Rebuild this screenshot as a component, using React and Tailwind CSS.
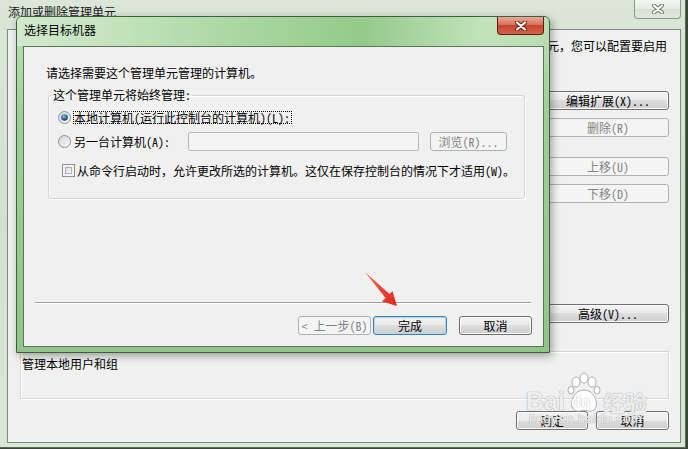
import React from 'react';

const btnBase = 'flex items-center justify-center rounded-[3px] border text-[12px] leading-none';
const btnNormal = `${btnBase} border-[#707070] bg-[linear-gradient(#f2f2f2,#ebebeb_50%,#dddddd_50%,#cfcfcf)] text-black shadow-[inset_0_0_0_1px_#fbfbfb]`;
const btnDefault = `${btnBase} border-[#3c7fb1] bg-[linear-gradient(#f2f2f2,#ebebeb_50%,#dddddd_50%,#cfcfcf)] text-black shadow-[inset_0_0_0_1px_#a9d9f3]`;
const btnDisabled = `${btnBase} border-[#adb2b5] bg-[#f4f4f4] text-[#838383]`;

// full-width punctuation must keep its width, so switch the half-width feature off here
const Cjk = ({ children }) => <span className="[font-feature-settings:normal]">{children}</span>;

const Radio = ({ checked, id }) => (
  <svg width="13" height="13" viewBox="0 0 13 13" className="shrink-0">
    <defs>
      <linearGradient id={`rb-${id}`} x1="0" y1="0" x2="1" y2="1">
        <stop offset="0" stopColor="#d2d2d2" />
        <stop offset="1" stopColor="#fbfbfb" />
      </linearGradient>
      <radialGradient id={`rd-${id}`} cx="0.4" cy="0.35" r="0.7">
        <stop offset="0" stopColor="#9cc8ea" />
        <stop offset="0.5" stopColor="#2f6ea3" />
        <stop offset="1" stopColor="#163a5f" />
      </radialGradient>
    </defs>
    <circle cx="6.5" cy="6.5" r="6" fill={`url(#rb-${id})`} stroke="#8e8f8f" />
    {checked && <circle cx="6.5" cy="6.5" r="3.3" fill={`url(#rd-${id})`} />}
  </svg>
);

const CloseX = ({ fill, stroke }) => (
  <svg width="12" height="10" viewBox="0 0 12 10">
    <path d="M2 1.5 L10 8.5 M10 1.5 L2 8.5" stroke={stroke} strokeWidth="4.2" strokeLinecap="round" />
    <path d="M2 1.5 L10 8.5 M10 1.5 L2 8.5" stroke={fill} strokeWidth="2.2" strokeLinecap="round" />
  </svg>
);

const RedArrow = () => (
  <svg width="42" height="42" viewBox="0 0 42 42" className="absolute left-[360px] top-[268px]">
    <defs>
      <linearGradient id="arrow-fill" x1="0" y1="0" x2="1" y2="1">
        <stop offset="0" stopColor="#f2665a" />
        <stop offset="1" stopColor="#e0261c" />
      </linearGradient>
    </defs>
    <polygon points="5,4 29.5,26 32.5,23 37,38 22,33.5 25.5,30" fill="url(#arrow-fill)" />
  </svg>
);

const Watermark = () => (
  <div className="pointer-events-none absolute left-[526px] top-[372px] flex flex-col items-start text-white/80 [text-shadow:0_0_1px_#a8a8a8,0_0_1px_#a8a8a8]">
    <div className="flex items-end">
      <span className="text-[25px] leading-[26px] font-bold font-['Liberation_Sans',sans-serif]">Bai</span>
      <div className="relative ml-[2px] h-[42px] w-[34px]">
        <svg width="34" height="42" viewBox="0 0 34 42" className="absolute left-0 top-0">
          <g fill="#ffffff" fillOpacity="0.8" stroke="#b0b0b0" strokeWidth="1">
            <ellipse cx="9" cy="10" rx="4" ry="5" />
            <ellipse cx="17" cy="6" rx="4" ry="5" />
            <ellipse cx="25" cy="10" rx="4" ry="5" />
            <ellipse cx="30" cy="18" rx="3" ry="4" />
            <ellipse cx="4" cy="18" rx="3" ry="4" />
            <path d="M17 18 C8 18 3 28 5 35 C7 41 14 39 17 38 C20 39 27 41 29 35 C31 28 26 18 17 18 Z" />
          </g>
        </svg>
        <span className="absolute left-[4px] top-[22px] text-[16px] leading-[16px] font-bold font-['Liberation_Sans',sans-serif] text-white [text-shadow:0_0_1px_#999]">du</span>
      </div>
      <span className="ml-[2px] text-[22px] leading-[26px] font-bold [font-feature-settings:normal]">经验</span>
    </div>
    <span className="ml-[3px] mt-[-2px] text-[13px] leading-[14px] font-['Liberation_Sans',sans-serif] tracking-[0.5px]">jingyan.baidu.com</span>
  </div>
);

const TargetDialog = () => (
  <div className="absolute left-[16px] top-[16px] flex h-[337px] w-[534px] flex-col rounded-t-[6px] border border-[#3f5e3b] bg-[linear-gradient(180deg,#bfe0b8_0%,#9ccf94_30%,#8fc687_100%)] px-[5px] pb-[5px] pl-[6px] shadow-[2px_3px_8px_rgba(0,0,0,0.35)]">
    <div className="-mx-[5px] -ml-[6px] flex h-[29px] items-start justify-between rounded-t-[5px] bg-[linear-gradient(90deg,#d2e9cc_0%,#c4e3bd_18%,#a6d59d_45%,#94ca8b_65%,#c3e2bc_88%,#b8dcb0_100%)] pl-[7px] pr-[5px]">
      <span className="mt-[7px] text-[12px] leading-[12px] text-black">选择目标机器</span>
      <div className="flex h-[18px] w-[47px] items-center justify-center rounded-b-[4px] border border-t-0 border-[#5e1d12] bg-[linear-gradient(#eaa898,#d8725d_45%,#c5462d_50%,#d2624a)]">
        <CloseX fill="#ffffff" stroke="#6b2417" />
      </div>
    </div>
    <div className="flex flex-1 flex-col border border-[#5b7656] bg-[#f0f0f0]">
      <div className="ml-[22px] mt-[20px] text-[12px] leading-[12px]">
        <Cjk>请选择需要这个管理单元管理的计算机。</Cjk>
      </div>

      <fieldset className="ml-[24px] mt-[10px] w-[474px] rounded-[3px] border border-[#d3d3d3] px-[9px] pb-[21px] shadow-[inset_1px_1px_0_#ffffff,1px_1px_0_#ffffff]">
        <legend className="-ml-[6px] px-[1px] text-[12px] leading-[12px]">这个管理单元将始终管理:</legend>

        <div className="mt-[10px] flex h-[13px] items-center">
          <Radio checked id="local" />
          <span className="ml-[2px] border border-dotted border-black pr-[1px] text-[12px] leading-[11px]">本地计算机(运行此控制台的计算机)(L):</span>
        </div>

        <div className="mt-[8px] flex h-[19px] items-center">
          <Radio id="other" />
          <span className="ml-[3px] w-[114px] text-[12px] leading-[12px]">另一台计算机(A):</span>
          <div className="h-[19px] w-[231px] rounded-[2px] border border-[#b5b9bc] bg-[#f4f4f4]" />
          <div className={`${btnDisabled} ml-[11px] h-[19px] w-[77px]`}>浏览(R)...</div>
        </div>

        <div className="mt-[13px] flex h-[13px] items-center">
          <div className="ml-[4px] h-[13px] w-[13px] shrink-0 border border-[#8e8f8f] bg-[#f4f4f4] p-[2px]">
            <div className="h-full w-full border border-[#aeb0b2] bg-[linear-gradient(135deg,#d9d9d9,#fbfbfb)]" />
          </div>
          <span className="ml-[2px] whitespace-nowrap text-[12px] leading-[12px]">
            <Cjk>从命令行启动时，允许更改所选的计算机。这仅在保存控制台的情况下才适用</Cjk>(W)<Cjk>。</Cjk>
          </span>
        </div>
      </fieldset>

      <div className="ml-[11px] mt-[103px] w-[496px] border-t border-b border-t-[#a0a0a0] border-b-white" />

      <div className="mt-[12px] flex justify-end pr-[11px]">
        <div className={`${btnDisabled} h-[19px] w-[73px]`}>&lt; 上一步(B)</div>
        <div className={`${btnDefault} ml-[2px] h-[19px] w-[74px]`}>完成</div>
        <div className={`${btnNormal} ml-[12px] h-[19px] w-[73px]`}>取消</div>
      </div>
    </div>
  </div>
);

export default function App() {
  return (
    <div className="relative h-[449px] w-[688px] overflow-hidden bg-[#3b4539] font-['Noto_Sans_CJK_SC',sans-serif] text-[12px] text-black [font-feature-settings:'hwid']">
      {/* background window: 添加或删除管理单元 */}
      <div className="flex h-[448px] w-[686px] flex-col border-r border-b border-[#5a6a58] bg-[linear-gradient(180deg,#dbe5d8_0%,#d3e1cf_50%,#d9e6d5_100%)] pb-[4px] pl-[7px] pr-[4px]">
        <div className="flex h-[29px] items-start justify-between">
          <span className="ml-[1px] mt-[6px] text-[12px] leading-[12px] text-[#1a1a1a]">添加或删除管理单元</span>
          <div className="flex h-[19px] w-[47px] items-center justify-center rounded-b-[4px] border border-t-0 border-[#8a9887] bg-[linear-gradient(#f3f6f2,#e4ebe2_50%,#d7e1d4_50%,#dfe8dc)]">
            <CloseX fill="#ffffff" stroke="#6f7c6d" />
          </div>
        </div>

        <div className="flex flex-1 flex-col border border-[#7b8c78] bg-[#f0f0f0] pl-[12px] pr-[11px]">
          <div className="flex justify-end">
            <div className="flex w-[122px] flex-col">
              <span className="mt-[10px] whitespace-nowrap text-[12px] leading-[12px]">
                <Cjk>元，您可以配置要启用</Cjk>
              </span>
              <div className={`${btnNormal} mt-[39px] h-[19px] w-full`}>编辑扩展(X)...</div>
              <div className={`${btnDisabled} mt-[8px] h-[19px] w-full`}>删除(R)</div>
              <div className={`${btnDisabled} mt-[20px] h-[19px] w-full`}>上移(U)</div>
              <div className={`${btnDisabled} mt-[8px] h-[19px] w-full`}>下移(D)</div>
              <div className={`${btnNormal} mt-[101px] h-[19px] w-full`}>高级(V)...</div>
            </div>
          </div>

          <div className="mt-[28px] h-[48px] border border-[#d6d6d6] pl-[1px] pt-[3px] shadow-[inset_1px_1px_0_#ffffff,1px_1px_0_#ffffff]">
            <span className="text-[12px] leading-[12px]">管理本地用户和组</span>
          </div>

          <div className="mt-[12px] flex justify-end">
            <div className={`${btnNormal} h-[19px] w-[72px]`}>确定</div>
            <div className={`${btnNormal} ml-[8px] h-[19px] w-[73px]`}>取消</div>
          </div>
        </div>
      </div>

      <TargetDialog />
      <RedArrow />
      <Watermark />
    </div>
  );
}
